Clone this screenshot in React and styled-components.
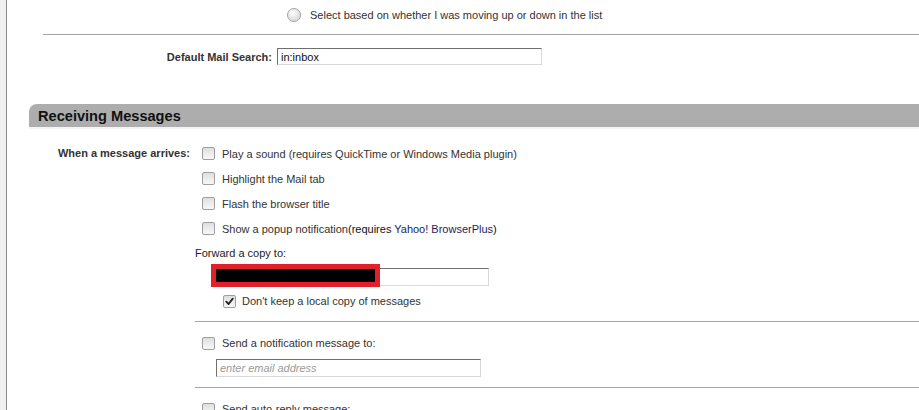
import React from "react";
import styled, { createGlobalStyle } from "styled-components";

/**
 * =Global
 ******************************/

const GlobalStyle = createGlobalStyle`
	html, body {
		margin: 0;
		padding: 0;
		background: #fff;
	}

	body {
		font-family: "Liberation Sans", Arial, sans-serif;
		font-size: 11px;
		color: #333;
		overflow: hidden;
	}
`;

/**
 * =Styles
 ******************************/

const Page = styled.div`
	display: flex;
	height: 410px;
	overflow: hidden;
`;

const Gutter = styled.div`
	width: 6px;
	flex: none;
	background: #f1f1f1;
	border-right: 1px solid #8c8c8c;
`;

const Content = styled.div`
	flex: 1;
	min-width: 0;
	display: flex;
	flex-direction: column;

	& > * {
		flex: none;
	}
`;

const RadioGroup = styled.div`
	margin-top: -21px;
	padding-left: 280px;
`;

const OptionRow = styled.label`
	display: flex;
	flex: none;
	align-items: center;
	gap: ${(p) => p.gap || 7}px;
	height: ${(p) => p.h || 24}px;
	padding-left: ${(p) => p.indent || 0}px;
	margin-top: ${(p) => p.top || 0}px;
	white-space: nowrap;
	color: #333;
`;

const Radio = styled.span`
	width: 12px;
	height: 12px;
	flex: none;
	border-radius: 50%;
	border: 1px solid #a3a3a3;
	background: radial-gradient(circle at 40% 35%, #fdfdfd 0%, #e4e4e4 55%, #cfcfcf 100%);
`;

const Box = styled.span`
	width: 11px;
	height: 11px;
	flex: none;
	border-radius: 2px;
	border: 1px solid #9e9e9e;
	background: linear-gradient(180deg, #dedede 0%, #ececec 50%, #f7f7f7 100%);
	display: flex;
	align-items: center;
	justify-content: center;

	svg {
		width: 9px;
		height: 9px;
	}
`;

const Divider = styled.hr`
	flex: none;
	margin: ${(p) => p.top || 0}px 0 0 ${(p) => p.left || 0}px;
	border: none;
	border-top: 1px solid #a4a4a4;
	height: 0;
`;

const FieldRow = styled.div`
	display: grid;
	grid-template-columns: ${(p) => p.labelWidth}px auto;
	column-gap: 5px;
	align-items: center;
	margin-top: ${(p) => p.top || 0}px;
`;

const FieldLabel = styled.div`
	text-align: right;
	font-weight: bold;
	color: #333;
	white-space: nowrap;
	font-size: 11px;
`;

const TextInput = styled.input`
	display: block;
	flex: none;
	box-sizing: border-box;
	width: ${(p) => p.w}px;
	height: ${(p) => p.h || 18}px;
	margin: ${(p) => p.top || 0}px 0 0 ${(p) => p.left || 0}px;
	padding: 0 3px;
	border: 1px solid;
	border-color: #6f6f6f #d9d9d9 #d9d9d9 #6f6f6f;
	font-family: "Liberation Sans", Arial, sans-serif;
	font-size: 11px;
	color: #111;
	outline: none;
	background: #fff;

	&::placeholder {
		color: #9a9a9a;
		font-style: italic;
	}
`;

const SectionHeader = styled.h2`
	box-sizing: border-box;
	margin: 39px 0 0 22px;
	height: 25px;
	padding-left: 9px;
	display: flex;
	align-items: center;
	background: #adadad;
	border-top-left-radius: 8px;
	border-bottom: 2px solid #f4f4f4;
	background-clip: padding-box;
	font-size: 14.6px;
	font-weight: bold;
	color: #111;
`;

const Form = styled.div`
	display: grid;
	grid-template-columns: 183px 1fr;
	column-gap: 5px;
	margin-top: 12px;
`;

const FormLabel = styled(FieldLabel)`
	line-height: 25px;
	height: 25px;
`;

const FormBody = styled.div`
	display: flex;
	flex-direction: column;
`;

const Plain = styled.div`
	height: 25px;
	line-height: 25px;
	color: #222;
`;

const Redacted = styled.div`
	position: relative;
	flex: none;
	margin: 2px 0 0 16px;
	width: 278px;
	height: 18px;
`;

const RedBox = styled.div`
	position: absolute;
	left: 0;
	top: -4px;
	width: 159px;
	height: 13px;
	border: 5px solid #e0202b;
	background: #000;
`;

const Dark = styled.span`
	color: ${(p) => p.c || "#111"};
`;

/**
 * =Parts
 ******************************/

function Check({ checked }) {
	return (
		<Box>
			{checked && (
				<svg viewBox="0 0 10 10">
					<path
						d="M1.5 5.2 L4 7.8 L8.6 1.8"
						fill="none"
						stroke="#222"
						strokeWidth="2"
						strokeLinecap="round"
						strokeLinejoin="round"
					/>
				</svg>
			)}
		</Box>
	);
}

/**
 * =App
 ************************************************************/

export default function App() {
	return (
		<>
			<GlobalStyle />
			<Page>
				<Gutter />
				<Content>
					<RadioGroup>
						<OptionRow gap={9}>
							<Radio />
							<span>Select the previous message in the list</span>
						</OptionRow>
						<OptionRow gap={9}>
							<Radio />
							<span>Select based on whether I was moving up or down in the list</span>
						</OptionRow>
					</RadioGroup>

					<Divider top={7} left={36} />

					<FieldRow labelWidth={265} top={13}>
						<FieldLabel>Default Mail Search:</FieldLabel>
						<TextInput w={265} h={17} defaultValue="in:inbox" />
					</FieldRow>

					<SectionHeader>Receiving Messages</SectionHeader>

					<Form>
						<FormLabel>When a message arrives:</FormLabel>
						<FormBody>
							<OptionRow h={25} indent={7}>
								<Check />
								<span>Play a sound (requires QuickTime or Windows Media plugin)</span>
							</OptionRow>
							<OptionRow h={25} indent={7}>
								<Check />
								<span>Highlight the Mail tab</span>
							</OptionRow>
							<OptionRow h={25} indent={7}>
								<Check />
								<span>Flash the browser title</span>
							</OptionRow>
							<OptionRow h={25} indent={7}>
								<Check />
								<span>
									Show a popup notification
									<Dark>(requires </Dark>
									<Dark c="#1d1d5e">Yahoo! BrowserPlus</Dark>
									<Dark>)</Dark>
								</span>
							</OptionRow>

							<Plain>Forward a copy to:</Plain>
							<Redacted>
								<TextInput w={278} />
								<RedBox />
							</Redacted>
							<OptionRow indent={28} gap={6} top={3}>
								<Check checked />
								<span>Don't keep a local copy of messages</span>
							</OptionRow>

							<Divider top={8} />

							<OptionRow indent={7} top={9}>
								<Check />
								<span>Send a notification message to:</span>
							</OptionRow>
							<TextInput w={265} left={21} top={4} placeholder="enter email address" />

							<Divider top={10} />

							<OptionRow indent={7} top={9}>
								<Check />
								<span>Send auto-reply message:</span>
							</OptionRow>
						</FormBody>
					</Form>
				</Content>
			</Page>
		</>
	);
}
